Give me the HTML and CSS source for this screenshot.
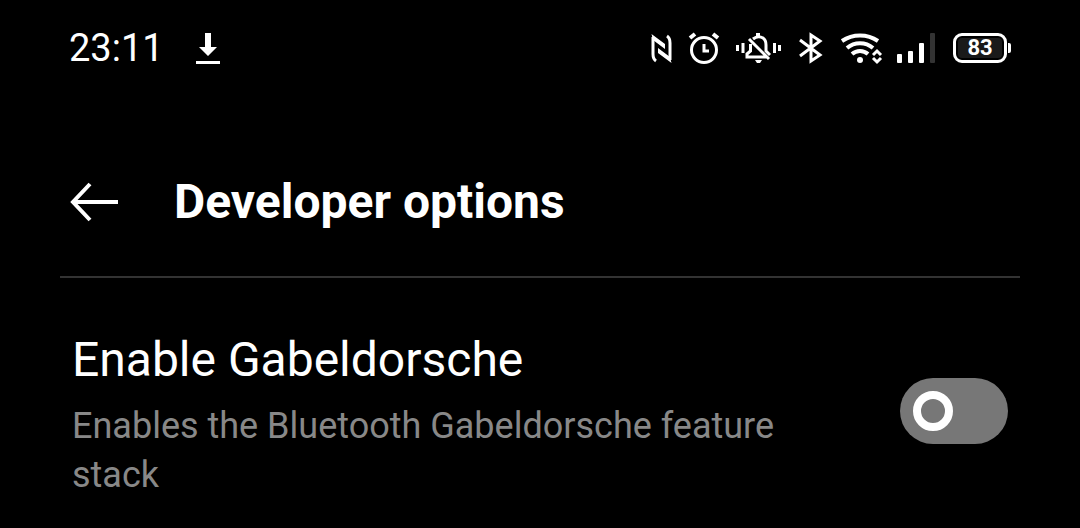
FILE: index.html
```html
<!DOCTYPE html>
<html lang="en">
<head>
    <meta charset="UTF-8">
    <meta name="viewport" content="width=device-width, initial-scale=1.0">
    <title>Developer options</title>
    <link rel="stylesheet" href="styles.css">
</head>
<body>
    <!-- Status Bar -->
    <div class="status-bar">
        <div class="status-left">
            <span class="clock">23:11</span>
            <svg class="download" width="24" height="32" viewBox="0 0 24 32" aria-hidden="true">
                <path d="M9 1h6v14h6l-9 9-9-9h6z" fill="#fff"/>
                <path d="M0 29h24v3H0z" fill="#fff"/>
            </svg>
        </div>
        <div class="status-icons">
            <!-- NFC -->
            <svg width="22" height="32" viewBox="0 0 22 32" aria-hidden="true">
                <path d="M5 29Q2 27 2 22V5M16 4Q19 6 19 11V28" stroke-width="3"/>
                <path d="M0.500 2L14 12V17L2 8zM20.500 31L7 21V16L19 25z" fill="#fff" stroke="none"/>
            </svg>
            <!-- Alarm -->
            <svg width="31" height="32" viewBox="0 0 31 32" aria-hidden="true">
                <circle cx="15" cy="18" r="12.500" stroke-width="3"/>
                <path d="M15 12v7h5" stroke-width="3"/>
                <path d="M1 6l5-4M29 6l-5-4" stroke-width="4"/>
            </svg>
            <!-- Vibrate -->
            <svg width="46" height="32" viewBox="0 0 46 32" aria-hidden="true">
                <path d="M1.500 13v6M7 11v10M38.500 11v10M43.500 13v6" stroke-width="3"/>
                <path d="M14.500 12V19L11 22V25H31M17 7Q22 3 27 6Q30 8 30 13V19L34 23M13 7L33 27" stroke-width="3"/>
                <path d="M22 1v4" stroke-width="4"/>
                <path d="M19 28h7l-2 3h-3z" fill="#fff" stroke="none"/>
            </svg>
            <!-- Bluetooth -->
            <svg width="25" height="32" viewBox="0 0 25 32" aria-hidden="true">
                <path d="M2 8L22 23L13 29V3L22 9L2 24" stroke-width="3"/>
            </svg>
            <!-- Wi-Fi -->
            <svg width="42" height="32" viewBox="0 0 42 32" aria-hidden="true">
                <path d="M3 9A32 32 0 0 1 39 9" stroke-width="4"/>
                <path d="M8 16A20 20 0 0 1 34 16" stroke-width="4"/>
                <path d="M13 22A12 12 0 0 1 29 22" stroke-width="4"/>
                <circle cx="21" cy="28" r="3" fill="#fff" stroke="none"/>
                <path d="M34 23l4-4 4 4M34 26l4 4 4-4" stroke-width="3"/>
            </svg>
            <!-- Signal -->
            <svg width="40" height="32" viewBox="0 0 40 32" aria-hidden="true">
                <g stroke="none" fill="#fff">
                    <rect x="0" y="22" width="5" height="9" rx="1"/>
                    <rect x="11" y="19" width="5" height="12" rx="1"/>
                    <rect x="22" y="11" width="5" height="20" rx="1"/>
                    <rect x="33" y="1" width="5" height="30" rx="1" fill="#333"/>
                </g>
            </svg>
            <div class="battery"><span class="battery-level">83</span></div>
        </div>
    </div>

    <!-- Header -->
    <header class="header">
        <button class="back-btn" type="button" aria-label="Back">
            <svg width="48" height="40" viewBox="0 0 48 40" aria-hidden="true">
                <path d="M20 2L3 20L20 38M3 20H48" fill="none" stroke="#fff" stroke-width="4"/>
            </svg>
        </button>
        <h1>Developer options</h1>
    </header>

    <!-- Option -->
    <main class="options">
        <div class="option">
            <label class="option-text" for="gabeldorsche">
                <span class="option-title">Enable Gabeldorsche</span>
                <span class="option-summary">Enables the Bluetooth Gabeldorsche feature stack</span>
            </label>
            <input class="switch" type="checkbox" role="switch" id="gabeldorsche">
        </div>
    </main>
</body>
</html>
```
FILE: styles.css
```css
/* Global Styles */
* {
    box-sizing: border-box;
}

body {
    margin: 0;
    background: #000;
    color: #fff;
    font-family: Roboto, sans-serif;
}

/* Status Bar */
.status-bar {
    display: flex;
    justify-content: space-between;
    align-items: center;
    height: 96px;
    padding: 0 68px;
}

.status-left {
    display: flex;
    align-items: center;
    gap: 32px;
    padding-left: 1px;
}

.clock {
    font-size: 38px;
    line-height: 48px;
}

.status-icons {
    display: flex;
    align-items: center;
    gap: 16px;
}

.status-icons svg {
    fill: none;
    stroke: #fff;
    overflow: visible;
}

.battery {
    position: relative;
    display: flex;
    width: 54px;
    height: 30px;
    margin-right: 5px;
    padding: 2px;
    border: 3px solid #fff;
    border-radius: 9px;
}

/* Battery tip */
.battery::after {
    content: "";
    position: absolute;
    top: 7px;
    right: -7px;
    width: 3px;
    height: 10px;
    border-radius: 0 2px 2px 0;
    background: #fff;
}

.battery-level {
    flex: 1;
    border-radius: 4px;
    background: #1a1a1a;
    font-size: 22px;
    font-weight: 700;
    line-height: 20px;
    text-align: center;
}

/* Header */
.header {
    display: flex;
    align-items: center;
    gap: 56px;
    height: 182px;
    margin: 0 60px;
    padding: 32px 10px 0;
    border-bottom: 2px solid #333;
}

.back-btn {
    display: flex;
    padding: 0;
    border: none;
    background: none;
    cursor: pointer;
}

.header h1 {
    margin: 0;
    font-size: 48px;
    font-weight: 700;
    line-height: 64px;
}

/* Options */
.option {
    display: flex;
    justify-content: space-between;
    align-items: center;
    gap: 72px;
    padding: 44px 72px 24px;
}

.option-text {
    flex: 1;
}

.option-title,
.option-summary {
    display: block;
}

.option-title {
    font-size: 48px;
    line-height: 76px;
}

.option-summary {
    margin-top: 4px;
    color: #888;
    font-size: 36px;
    line-height: 49px;
}

/* Switch */
.switch {
    flex: none;
    display: flex;
    align-items: center;
    width: 108px;
    height: 66px;
    margin: 0;
    padding: 0 13px;
    border-radius: 33px;
    background: #777;
    appearance: none;
    cursor: pointer;
}

.switch::before {
    content: "";
    box-sizing: border-box;
    width: 40px;
    height: 40px;
    border: 8px solid #fff;
    border-radius: 50%;
}

.switch:checked {
    justify-content: flex-end;
    background: #2ac845;
}
```
